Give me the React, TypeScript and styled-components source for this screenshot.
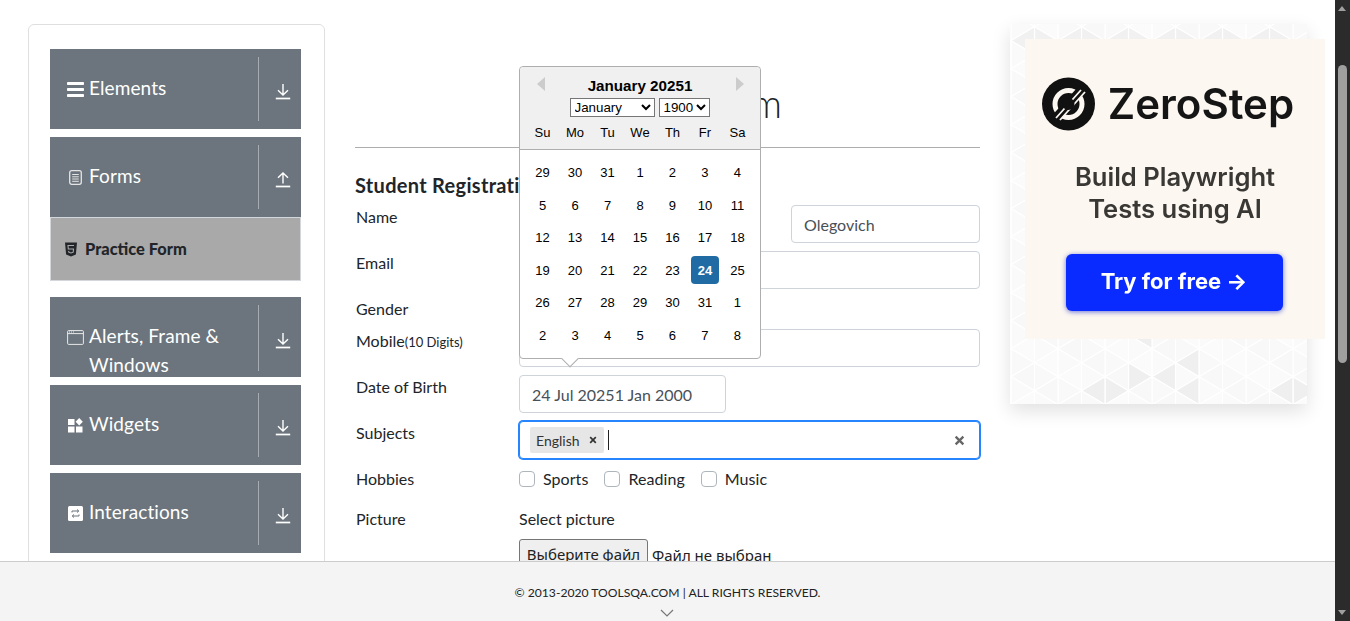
import React from "react";
import styled, { createGlobalStyle } from "styled-components";

const Global = createGlobalStyle`
  html, body { margin: 0; padding: 0; height: 100%; overflow: hidden; background: #fff; }
  * { box-sizing: border-box; }
  #root { height: 100%; }
`;

const Shell = styled.div`
  display: flex; width: 1350px; height: 621px; overflow: hidden;
  font-family: Lato, "Noto Sans", sans-serif; font-size: 16px; line-height: 24px; color: #212529;
`;
const Main = styled.div`display: flex; flex-direction: column; width: 1335px; height: 621px;`;
const Content = styled.div`
  height: 561px; overflow: hidden; flex: none;
  display: grid; grid-template-columns: 297px 625px 297px; column-gap: 30px; padding: 24px 0 0 28px;
  align-items: start;
`;

const SideCard = styled.aside`
  border: 1px solid #dfdfdf; border-radius: 6px; padding: 24px 23px 40px 21px;
  display: flex; flex-direction: column; gap: 8px; background: #fff; height: 600px;
`;
const Group = styled.div<{ $open?: boolean }>`
  display: flex; flex-direction: column; margin-bottom: ${p => (p.$open ? "8px" : "0")};
`;
const GroupHead = styled.div`
  height: 80px; background: #6c757d; color: #fff; overflow: hidden; flex: none;
  display: grid; grid-template-columns: 208px 43px;
`;
const HeadLabel = styled.div`
  display: flex; align-items: flex-start; padding: 24px 0 0 17px; font-size: 19px; line-height: 29px;
  letter-spacing: 0.1px;
`;
const HeadIcon = styled.span`
  width: 17px; flex: none; display: flex; justify-content: center; padding-top: 9px; margin-right: 5px;
`;
const HeadToggle = styled.div`
  margin: 8px 0; border-left: 1px solid #a6acb2; padding: 4px 0 0 16px; display: flex; align-items: center;
`;
const SubItem = styled.div`
  height: 64px; background: #a9a9a9; border: 1px solid #d3d7db; display: flex; align-items: center;
  padding-left: 14px; gap: 8px; font-size: 16.4px; font-weight: 900; color: #212529;
`;

const FormCol = styled.main`display: flex; flex-direction: column;`;
const Title = styled.h1`
  margin: 55px 0 0; height: 69px; padding-bottom: 20px; border-bottom: 1px solid #adadad;
  font-size: 38.5px; line-height: 48px; font-weight: 300; text-align: center; color: #212529;
`;
const FormHeading = styled.h5`
  margin: 25px 0 8px; font-size: 20px; line-height: 24px; font-weight: 700; letter-spacing: 0.3px;
`;
const Row = styled.div<{ $h?: number }>`
  display: grid; grid-template-columns: 164px 461px; margin-bottom: 8px;
  min-height: ${p => p.$h ?? 24}px;
`;
const Label = styled.label`display: block; padding-left: 1px; font-size: 16px;`;
const Small = styled.small`font-size: 13px;`;
const NameFields = styled.div`display: flex; justify-content: space-between;`;
const Input = styled.div<{ $w?: number }>`
  width: ${p => (p.$w ? p.$w + "px" : "100%")}; height: 38px; border: 1px solid #ced4da; border-radius: 4px;
  padding: 7px 12px 5px; color: #495057; background: #fff; font-size: 16px; line-height: 24px;
`;
const DobWrap = styled.div`position: relative; width: 207px;`;

const Popup = styled.div`
  position: absolute; left: 0; bottom: calc(100% + 16px); width: 242px; height: 293px; z-index: 5;
  background: #fff; border: 1px solid #aeaeae; border-radius: 4px; font-family: "Liberation Sans", Arial, sans-serif;
  color: #000; font-size: 13px;
`;
const PopupTail = styled.div`
  position: absolute; left: 44px; bottom: -7px; width: 12px; height: 12px; background: #fff;
  border-right: 1px solid #aeaeae; border-bottom: 1px solid #aeaeae; transform: rotate(45deg);
`;
const CalHead = styled.div`
  height: 83px; background: #f0f0f0; border-bottom: 1px solid #aeaeae; border-radius: 4px 4px 0 0;
  padding-top: 10px; text-align: center;
`;
const CalTitle = styled.div`font-size: 15.2px; font-weight: 700; line-height: 18px;`;
const Selects = styled.div`display: flex; justify-content: center; gap: 4px; margin-top: 3px; padding-right: 1px;`;
const NativeSelect = styled.select<{ $w: number }>`
  width: ${p => p.$w}px; height: 19px; font-family: "Liberation Sans", Arial, sans-serif; font-size: 13.33px; padding: 0; margin: 0; background: #fff;
`;
const DayNames = styled.div`
  display: grid; grid-template-columns: repeat(7, 27.2px); column-gap: 5.31px; justify-content: center; margin-top: 6px;
  line-height: 20px; font-size: 13px; text-align: center; color: #000;
`;
const NavArrow = styled.span<{ $side: "left" | "right" }>`
  position: absolute; top: 10px; ${p => p.$side}: ${p => (p.$side === "left" ? 17 : 16)}px; width: 0; height: 0;
  border-top: 7px solid transparent; border-bottom: 7px solid transparent;
  ${p => (p.$side === "left" ? "border-right: 8px solid #ccc;" : "border-left: 8px solid #ccc;")}
`;
const Days = styled.div`
  display: grid; grid-template-columns: repeat(7, 27.2px); grid-auto-rows: 28px; column-gap: 5.31px; row-gap: 4.55px;
  justify-content: center; padding-top: 8px; text-align: center;
`;
const Day = styled.div<{ $sel?: boolean }>`
  line-height: 29px; border-radius: 4px; font-size: 13px;
  ${p => (p.$sel ? "background: #216ba5; color: #fff; font-weight: 700;" : "")}
`;

const SubjectBox = styled.div`
  height: 38px; border: 1px solid #2684ff; box-shadow: 0 0 0 1px #2684ff; border-radius: 4px; background: #fff;
  display: flex; align-items: center; padding: 0 14px 0 10px;
`;
const Chip = styled.div`
  display: flex; align-items: center; height: 26px; width: 74px; background: #e6e6e6; border-radius: 2px; padding: 1px 0 0 6px;
  font-size: 14px; color: #333; line-height: 26px;
`;
const ChipX = styled.span`margin: -2px 0 0 9px; display: flex;`;
const Caret = styled.span`width: 1px; height: 20px; background: #222; margin-left: 4px;`;
const Clear = styled.span`margin-left: auto; display: flex;`;

const Checks = styled.div`display: flex; align-self: start;`;
const CheckItem = styled.div`display: flex; align-items: center; margin-right: 16px; letter-spacing: 0.06px;`;
const Box = styled.span`
  width: 16px; height: 16px; border: 1px solid #adb5bd; border-radius: 4px; background: #fff; margin-right: 8px;
`;
const Stack = styled.div`display: flex; flex-direction: column; gap: 8px;`;
const FileLine = styled.div`display: flex; align-items: center; font-family: "Noto Sans", sans-serif; font-size: 15px; color: #222;`;
const FileBtn = styled.div`
  height: 31px; width: 129px; background: #efefef; border: 1px solid #767676; border-radius: 3px; text-align: center;
  line-height: 29px; margin-right: 4px;
`;

const AdCard = styled.div`
  position: relative; width: 297px; height: 380px; background: #fbfbfb; box-shadow: 0 7px 18px rgba(0,0,0,.12);
`;
const AdPattern = styled.svg`display: block; width: 100%; height: 100%; filter: blur(.5px);`;
const Ad = styled.div`
  position: absolute; left: 15px; top: 15px; width: 300px; height: 300px; background: #fcf7f1;
  display: flex; flex-direction: column; align-items: center; padding-top: 38px; font-family: Inter, sans-serif;
`;
const Brand = styled.div`display: flex; align-items: center; gap: 13px; height: 54px; margin-right: 14px;`;
const BrandName = styled.span`font-size: 42px; line-height: 54px; font-weight: 600; color: #151515; filter: blur(.5px);`;
const AdText = styled.div`
  margin-top: 30px; font-size: 25.6px; line-height: 32px; font-weight: 600; text-align: center; color: #3a3835; filter: blur(.5px);
`;
const AdButton = styled.div`
  margin: 29px 2px 0 0; width: 217px; height: 57px; border-radius: 6px; background: #0a2bff; color: #fff; box-shadow: 0 1px 5px rgba(10,30,200,.6);
  display: flex; align-items: center; justify-content: center; padding-bottom: 4px; font-size: 22px; font-weight: 700;
`;
const AdBtnText = styled.span`filter: blur(.4px);`;

const Footer = styled.footer`
  position: relative; height: 60px; background: #f4f4f4; border-top: 1px solid #ccc; flex: none; text-align: center;
  font-size: 12.15px; line-height: 20px; padding-top: 21px; color: #222;
`;
const FooterChevron = styled.svg`position: absolute; left: 660px; bottom: 4px;`;

const Scrollbar = styled.div`
  width: 15px; height: 621px; background: #2b2b2b; display: flex; flex-direction: column; align-items: center; position: relative;
`;
const ThumbArrow = styled.span<{ $up?: boolean }>`
  position: absolute; left: 3px; ${p => (p.$up ? "top: 6px;" : "bottom: 6px;")} width: 0; height: 0;
  border-left: 4.5px solid transparent; border-right: 4.5px solid transparent;
  ${p => (p.$up ? "border-bottom: 5px solid #9f9f9f;" : "border-top: 5px solid #9f9f9f;")}
`;
const Thumb = styled.div`margin-top: 65px; width: 9px; height: 298px; border-radius: 4.5px; background: #9f9f9f;`;

const Down = () => (
  <svg width="16" height="17" viewBox="0 0 16 17" fill="none" stroke="#fff" strokeWidth="1.4">
    <path d="M8 1V12M3 7.200l5 4.800 5-4.800" /><path d="M.8 15.500h14.400" strokeWidth="1.700" />
  </svg>
);
const Up = () => (
  <svg width="16" height="17" viewBox="0 0 16 17" fill="none" stroke="#fff" strokeWidth="1.4">
    <path d="M8 12.500V2M3 6.800L8 2l5 4.800" /><path d="M.8 15.500h14.400" strokeWidth="1.700" />
  </svg>
);
const Bars = () => (
  <svg width="17" height="15" viewBox="0 0 17 15" fill="#fff"><rect y="0" width="17" height="3" rx=".8" /><rect y="6" width="17" height="3" rx=".8" /><rect y="12" width="17" height="3" rx=".8" /></svg>
);
const Doc = () => (
  <svg width="13" height="15" viewBox="0 0 13 15" fill="none" stroke="#e4e4e4"><rect x=".7" y=".7" width="11.600" height="13.600" rx="2" strokeWidth="1.300" /><path d="M3.200 4.500h6.600M3.200 6.800h6.600M3.200 9h6.600M3.200 11.300h6.600" strokeWidth="1" /></svg>
);
const Win = () => (
  <svg width="17" height="15" viewBox="0 0 17 15" fill="none" stroke="#e8e8e8"><rect x=".6" y=".6" width="15.800" height="13.800" rx="1" /><path d="M.6 3.600h15.800" /><path d="M2 2h1M4 2h1M6 2h1" /></svg>
);
const Wid = () => (
  <svg width="15" height="15" viewBox="0 0 15 15" fill="#fff"><rect x="0" y="1" width="6.500" height="6" /><rect x="0" y="8.500" width="6.500" height="6" /><rect x="8" y="8.500" width="6.500" height="6" /><path d="M11.200 0l3.600 3.700-3.600 3.700-3.600-3.700z" /></svg>
);
const Inter_ = () => (
  <svg width="15" height="15" viewBox="0 0 15 15"><rect width="15" height="15" rx="1.500" fill="#fff" /><path d="M4 6.500V5h6.500M9 3.500L10.800 5 9 6.500M11 8.500V10H4.500M6 8.500L4.200 10 6 11.500" fill="none" stroke="#6c757d" strokeWidth="1" /></svg>
);
const Html5 = () => (
  <svg width="12" height="15" viewBox="0 0 12 15"><path d="M0 .5h12l-1.100 12L6 14.500 1.100 12.500z" fill="#22252a" /><path d="M9 3.500H3l.3 3.500h5.200l-.3 3.200L6 11l-2.200-.8-.1-1.300" fill="none" stroke="#a9a9a9" strokeWidth="1.100" /></svg>
);
const Cross = ({ s, c }: { s: number; c: string }) => (
  <svg width={s} height={s} viewBox="0 0 10 10" stroke={c} strokeWidth="2.100" fill="none"><path d="M1.500 1.500l7 7M8.500 1.500l-7 7" /></svg>
);
const Logo = () => (
  <svg width="53" height="54" viewBox="0 0 53 54">
    <circle cx="26.500" cy="27" r="26.500" fill="#111" />
    <circle cx="26.500" cy="27" r="13.500" fill="none" stroke="#fcf7f1" strokeWidth="5" />
    <path d="M12 43L41 11" stroke="#111" strokeWidth="9" />
    <path d="M14 41L39 13M18 43L43 15" stroke="#fcf7f1" strokeWidth="1.800" />
    <circle cx="26.500" cy="27" r="6" fill="#111" />
  </svg>
);

const weekDays = ["Su", "Mo", "Tu", "We", "Th", "Fr", "Sa"];
const dates = [29,30,31,1,2,3,4,5,6,7,8,9,10,11,12,13,14,15,16,17,18,19,20,21,22,23,24,25,26,27,28,29,30,31,1,2,3,4,5,6,7,8];

const nav = [
  { icon: <Bars />, name: "Elements" },
  { icon: <Doc />, name: "Forms", open: true },
  { icon: <Win />, name: "Alerts, Frame & Windows" },
  { icon: <Wid />, name: "Widgets" },
  { icon: <Inter_ />, name: "Interactions" },
];

// triangular lattice of the ad's backdrop: nodes sit on (1 + 23.5i, 16.7 + 14j) with i + j even
const W = 23.5, H = 14;
const darkTris = new Set(["L4,24", "R4,24", "R5,23", "L7,23", "L8,24", "L12,24", "R12,24", "L8,22", "R1,22", "L6,20"]);
const topDark = new Set([1, 3, 5, 7, 9, 11]);
const tris: { d: string; fill: string }[] = [];
for (let j = -3; j < 27; j++) {
  for (let i = -1; i < 14; i++) {
    if ((i + j) % 2 !== 0) continue;
    const x = 1 + W * i, y = 16.7 + H * j;
    (["R", "L"] as const).forEach(side => {
      const dx = side === "R" ? W : -W;
      const key = `${side}${i},${j}`;
      const isTop = j === -1 && (side === "R" ? topDark.has(i) || topDark.has(i + 1) : topDark.has(i));
      const shade = (i * 7 + j * 13 + (side === "R" ? 3 : 0)) % 4;
      const fill = darkTris.has(key) ? "#efefef" : isTop ? "#f1f1f1" : ["#fbfbfb", "#f9f9f9", "#f8f8f8", "#fafafa"][Math.abs(shade)];
      tris.push({ d: `M${x} ${y}V${y + 2 * H}L${x + dx} ${y + H}Z`, fill });
    });
  }
}

export default function App() {
  return (
    <Shell>
      <Global />
      <Main>
        <Content>
          <SideCard>
            {nav.map(n => (
              <Group key={n.name} $open={n.open}>
                <GroupHead>
                  <HeadLabel><HeadIcon>{n.icon}</HeadIcon><span>{n.name}</span></HeadLabel>
                  <HeadToggle>{n.open ? <Up /> : <Down />}</HeadToggle>
                </GroupHead>
                {n.open && <SubItem><Html5 />Practice Form</SubItem>}
              </Group>
            ))}
          </SideCard>
          <FormCol>
            <Title>Practice Form</Title>
            <FormHeading>Student Registration Form</FormHeading>
            <Row>
              <Label>Name</Label>
              <NameFields>
                <Input $w={188}>Ivan</Input>
                <Input $w={189}>Olegovich</Input>
              </NameFields>
            </Row>
            <Row><Label>Email</Label><Input /></Row>
            <Row><Label>Gender</Label><div /></Row>
            <Row><Label>Mobile<Small>(10 Digits)</Small></Label><Input /></Row>
            <Row>
              <Label>Date of Birth</Label>
              <DobWrap>
                <Input>24 Jul 20251 Jan 2000</Input>
                <Popup>
                  <PopupTail />
                  <CalHead>
                    <CalTitle>January 20251</CalTitle>
                    <Selects>
                      <NativeSelect $w={85} defaultValue="January"><option>January</option></NativeSelect>
                      <NativeSelect $w={51} defaultValue="1900"><option>1900</option></NativeSelect>
                    </Selects>
                    <DayNames>{weekDays.map(d => <span key={d}>{d}</span>)}</DayNames>
                  </CalHead>
                  <NavArrow $side="left" />
                  <NavArrow $side="right" />
                  <Days>
                    {dates.map((d, i) => <Day key={i} $sel={i === 26}>{d}</Day>)}
                  </Days>
                </Popup>
              </DobWrap>
            </Row>
            <Row>
              <Label>Subjects</Label>
              <SubjectBox>
                <Chip>English<ChipX><Cross s={8} c="#333" /></ChipX></Chip>
                <Caret />
                <Clear><Cross s={11} c="#666" /></Clear>
              </SubjectBox>
            </Row>
            <Row $h={32}>
              <Label>Hobbies</Label>
              <Checks>
                <CheckItem><Box />Sports</CheckItem>
                <CheckItem><Box />Reading</CheckItem>
                <CheckItem><Box />Music</CheckItem>
              </Checks>
            </Row>
            <Row>
              <Label>Picture</Label>
              <Stack>
                <span>Select picture</span>
                <FileLine><FileBtn>Выберите файл</FileBtn>Файл не выбран</FileLine>
              </Stack>
            </Row>
          </FormCol>
          <AdCard>
            <AdPattern viewBox="0 0 297 380">
              {tris.map((t, i) => <path key={i} d={t.d} fill={t.fill} stroke="#ffffff" strokeWidth="1.200" />)}
            </AdPattern>
            <Ad>
              <Brand><Logo /><BrandName>ZeroStep</BrandName></Brand>
              <AdText>Build Playwright<br />Tests using AI</AdText>
              <AdButton><AdBtnText>Try for free →</AdBtnText></AdButton>
            </Ad>
          </AdCard>
        </Content>
        <Footer>
          © 2013-2020 TOOLSQA.COM | ALL RIGHTS RESERVED.
          <FooterChevron width="14" height="8" viewBox="0 0 14 8" fill="none" stroke="#777" strokeWidth="1.200"><path d="M1 1l6 6 6-6" /></FooterChevron>
        </Footer>
      </Main>
      <Scrollbar>
        <ThumbArrow $up />
        <Thumb />
        <ThumbArrow />
      </Scrollbar>
    </Shell>
  );
}
